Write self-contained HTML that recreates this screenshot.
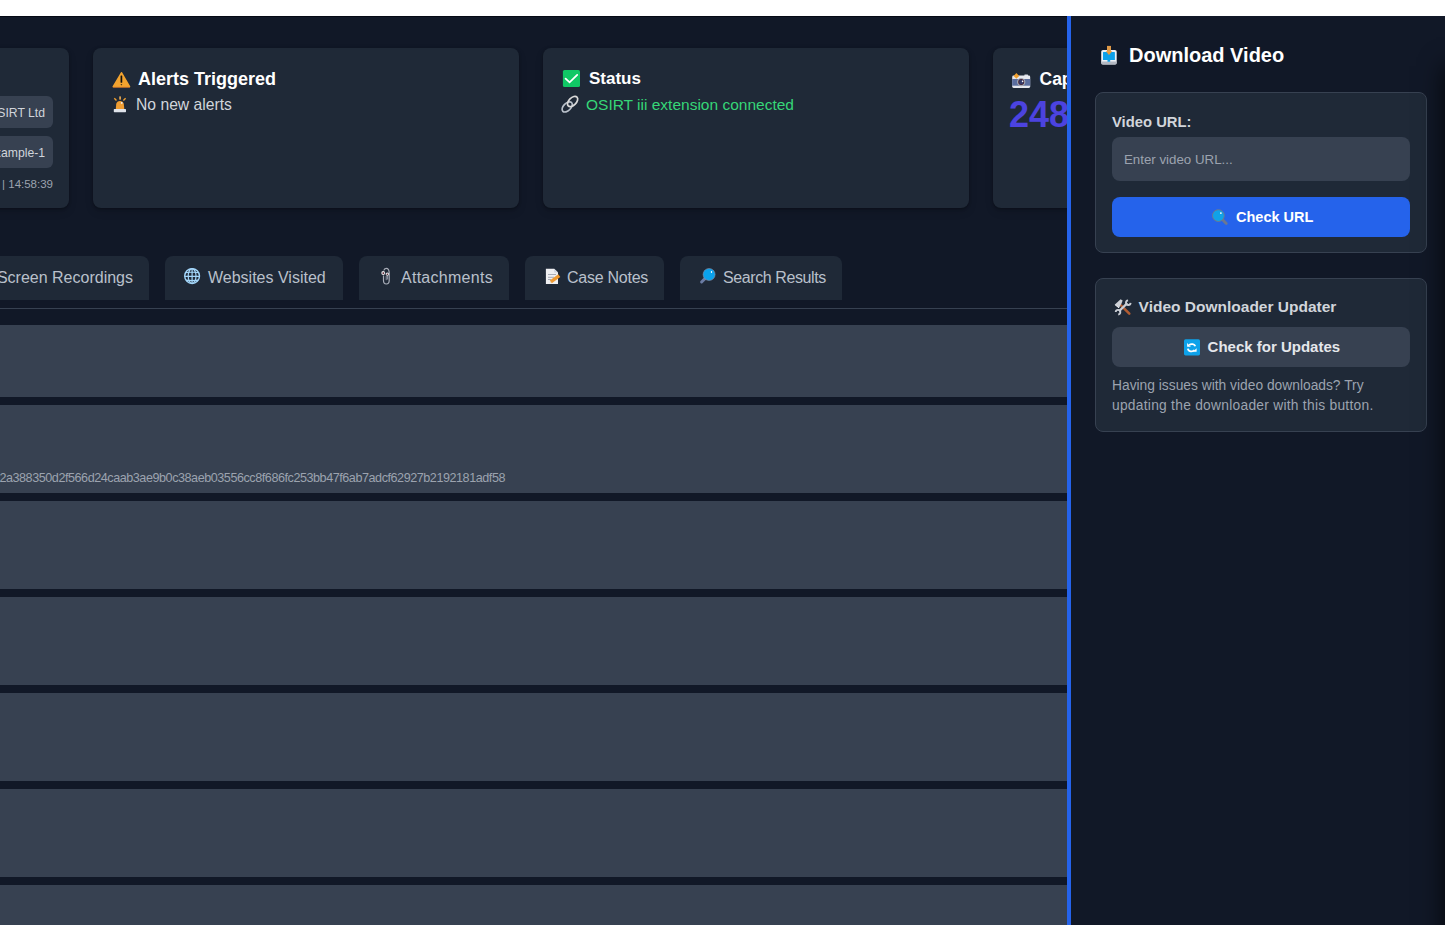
<!DOCTYPE html>
<html><head><meta charset="utf-8">
<style>
*{box-sizing:border-box;margin:0;padding:0}
html,body{width:1445px;height:925px;overflow:hidden;background:#111827;font-family:"Liberation Sans",sans-serif;}
.abs{position:absolute}
#topbar{left:0;top:0;width:1445px;height:16px;background:#fff}
#topline{left:0;top:16px;width:1445px;height:1px;background:#050914}
.card{position:absolute;top:48px;width:426px;height:160px;background:#1f2937;border-radius:8px;box-shadow:0 1px 3px rgba(0,0,0,.3),0 4px 8px rgba(0,0,0,.12)}
.badge{position:absolute;background:#374151;border-radius:6px;height:32px;color:#d1d5db;font-size:12.2px;line-height:34px;white-space:nowrap}
.tab{position:absolute;top:256px;height:44px;background:#1f2937;border-radius:8px 8px 0 0;color:#b9c0cb;font-size:16px;line-height:43px;white-space:nowrap}
.row{position:absolute;left:0;width:1067px;background:#374151}
.t{position:absolute;white-space:nowrap}
svg{position:absolute;overflow:visible}
#panel{left:1067px;top:16px;width:378px;height:909px;background:#111827;border-left:4px solid #2563eb}
.box{position:absolute;left:1095px;width:332px;background:#1f2937;border:1px solid #374151;border-radius:8px}
.btn{position:absolute;left:1112px;width:298px;height:40px;border-radius:8px}
</style></head><body>
<div class="abs" id="topbar"></div>
<div class="abs" id="topline"></div>

<!-- cards -->
<div class="card" style="left:-357px"></div>
<div class="card" style="left:93px"></div>
<div class="card" style="left:543px"></div>
<div class="card" style="left:993px"></div>

<div class="badge" style="left:-40px;top:96px;width:93px;padding-right:8px;text-align:right">OSIRT Ltd</div>
<div class="badge" style="left:-40px;top:136px;width:93px;padding-right:8px;text-align:right">example-1</div>
<div class="t" style="right:1392px;top:176px;font-size:11.5px;line-height:16px;color:#9ca3af">2025-01-01 | 14:58:39</div>

<div class="t" style="left:138px;top:68px;font-size:18px;line-height:22px;font-weight:700;color:#fff">Alerts Triggered</div>
<div class="t" style="left:136px;top:95px;font-size:15.7px;line-height:20px;color:#d1d5db">No new alerts</div>

<div class="t" style="left:589px;top:68px;font-size:17px;line-height:22px;font-weight:700;color:#fff">Status</div>
<div class="t" style="left:586px;top:95px;font-size:15.5px;line-height:20px;color:#36d677">OSIRT iii extension connected</div>

<div class="t" style="left:1039.5px;top:68px;font-size:17.5px;line-height:22px;font-weight:700;color:#fff">Capture</div>
<div class="t" style="left:1009px;top:95px;font-size:36px;line-height:40px;font-weight:700;color:#4c43e0">248</div>

<!-- tabs -->
<div class="tab" style="left:-60px;width:209px;padding-left:16px;text-align:right;padding-right:16px">Screen Recordings</div>
<div class="tab" style="left:165px;width:178px;padding-left:43px">Websites Visited</div>
<div class="tab" style="left:359px;width:150px;padding-left:42px;letter-spacing:0.27px">Attachments</div>
<div class="tab" style="left:525px;width:139px;padding-left:42px;letter-spacing:-0.25px">Case Notes</div>
<div class="tab" style="left:680px;width:162px;padding-left:43px;letter-spacing:-0.4px">Search Results</div>
<div class="abs" style="left:0;top:308px;width:1067px;height:1px;background:#374151"></div>

<!-- rows -->
<div class="row" style="top:325px;height:72px"></div>
<div class="row" style="top:405px;height:88px"></div>
<div class="row" style="top:501px;height:88px"></div>
<div class="row" style="top:597px;height:88px"></div>
<div class="row" style="top:693px;height:88px"></div>
<div class="row" style="top:789px;height:88px"></div>
<div class="row" style="top:885px;height:88px"></div>
<div class="t" style="right:940px;top:470px;font-size:12.6px;letter-spacing:-0.45px;line-height:16px;color:#9ca3af">2a388350d2f566d24caab3ae9b0c38aeb03556cc8f686fc253bb47f6ab7adcf62927b2192181adf58</div>

<!-- panel -->
<div class="abs" id="panel"></div>
<div class="t" style="left:1129px;top:43px;font-size:20px;line-height:24px;font-weight:700;color:#fff">Download Video</div>

<div class="box" style="top:92px;height:161px"></div>
<div class="t" style="left:1112px;top:113px;font-size:14.8px;line-height:18px;font-weight:700;color:#d1d5db">Video URL:</div>
<div class="abs" style="left:1112px;top:137px;width:298px;height:44px;background:#374151;border-radius:8px"></div>
<div class="t" style="left:1124px;top:151.5px;font-size:13.3px;line-height:16px;color:#9ca3af">Enter video URL...</div>
<div class="btn" style="top:197px;background:#2563eb"></div>
<div class="t" style="left:1236px;top:208px;font-size:14.5px;line-height:18px;font-weight:700;color:#fff">Check URL</div>

<div class="box" style="top:278px;height:154px"></div>
<div class="t" style="left:1138.6px;top:298px;font-size:15.5px;line-height:18px;font-weight:700;color:#d1d5db">Video Downloader Updater</div>
<div class="btn" style="top:327px;background:#374151"></div>
<div class="t" style="left:1207.6px;top:338px;font-size:15px;line-height:18px;font-weight:700;color:#e5e7eb">Check for Updates</div>
<div class="t" style="left:1112px;top:376px;font-size:13.8px;line-height:20px;color:#9ca3af">Having issues with video downloads? Try<br><span style="letter-spacing:0.26px">updating the downloader with this button.</span></div>


<!-- icons -->
<svg style="left:108px;top:66px" width="26" height="26" viewBox="0 0 26 26">
 <path d="M13.5 6.8 L21.5 20.7 L5.3 20.7 Z" fill="#f2a32f" stroke="#f2a32f" stroke-width="1.6" stroke-linejoin="round"/>
 <path d="M5.2 21.4 L21.6 21.4" stroke="#b8662c" stroke-width="0.8"/>
 <rect x="12.55" y="9.6" width="1.7" height="7.2" fill="#111" rx="0.5"/>
 <path d="M12.5 18.2 L14.3 18.2 L13.4 19.6 Z" fill="#111"/>
</svg>
<svg style="left:110px;top:94px" width="20" height="20" viewBox="0 0 20 20">
 <rect x="3.8" y="15.1" width="12.2" height="3.1" rx="0.6" fill="#dfe3ea"/>
 <path d="M5.8 15.1 L6.2 10 C6.6 8 8 6.9 10 6.9 C12 6.9 13.4 8 13.8 10 L14.3 15.1 Z" fill="#ef9d32"/>
 <circle cx="11.7" cy="8.9" r="0.9" fill="#eef4ff"/>
 <rect x="9.2" y="2.4" width="1.8" height="3.2" fill="#d9a050"/>
 <path d="M4.3 4.3 L6.5 6.5 M15.6 4.3 L13.4 6.5" stroke="#f0a030" stroke-width="1.4"/>
</svg>
<svg style="left:559px;top:66px" width="24" height="24" viewBox="0 0 24 24">
 <rect x="3.9" y="3.9" width="17.1" height="17.1" rx="1.6" fill="#10c865"/>
 <path d="M6.6 12.6 L10.6 16.3 L18.2 8.9" fill="none" stroke="#fff" stroke-width="1.8" stroke-linecap="round"/>
</svg>
<svg style="left:559px;top:94px" width="22" height="22" viewBox="0 0 22 22">
 <ellipse cx="8.2" cy="12.9" rx="6.2" ry="3.7" transform="rotate(-45 8.2 12.9)" fill="none" stroke="#b9c0ca" stroke-width="1.7"/>
 <ellipse cx="13.6" cy="7.5" rx="6.2" ry="3.7" transform="rotate(-45 13.6 7.5)" fill="none" stroke="#d9d9d9" stroke-width="1.7"/>
</svg>
<svg style="left:1008px;top:68px" width="26" height="26" viewBox="0 0 26 26">
 <rect x="16.3" y="6.6" width="3.8" height="1.6" rx="0.6" fill="#d6dae2"/>
 <rect x="4.2" y="7.6" width="18" height="12.4" rx="1.4" fill="#e6e8ee"/>
 <rect x="4.2" y="11" width="18" height="6.7" fill="#5b6e9f"/>
 <circle cx="13.2" cy="14.1" r="4.2" fill="#a4a9b3"/>
 <circle cx="13.2" cy="14.1" r="3" fill="#4a2030"/>
 <circle cx="13.2" cy="14.1" r="2.3" fill="#333a6a"/>
 <circle cx="14.6" cy="13.4" r="0.8" fill="#fff"/>
 <path d="M8.4 5.1 L11.2 7.9 L8.4 10.7 L5.6 7.9 Z" fill="#f0a030"/>
</svg>
<svg style="left:1097px;top:42px" width="24" height="24" viewBox="0 0 24 24">
 <rect x="4.2" y="8" width="15.5" height="14.6" rx="1.8" fill="#eef1f6"/>
 <rect x="4.4" y="19.6" width="15.1" height="3" rx="1" fill="#b3b8c2"/>
 <path d="M6 10.2 Q6 9.9 6.6 9.9 L17.3 9.9 Q17.9 9.9 17.9 10.5 L17.9 17.9 L13.2 17.9 L13.2 19.7 L10.5 19.7 L10.5 17.9 L6 17.9 Z" fill="#0ea1ea"/>
 <rect x="10" y="3.9" width="4" height="5.8" fill="#e09a48"/>
 <path d="M8.8 9.3 L15.2 9.3 L12 13 Z" fill="#ef9a38"/>
</svg>
<svg style="left:1208px;top:205px" width="24" height="24" viewBox="0 0 24 24">
 <path d="M14.6 14.8 L18.3 18.5" stroke="#6b7890" stroke-width="2.8" stroke-linecap="round"/>
 <circle cx="10.4" cy="10.6" r="5.9" fill="#10a2e8" stroke="#6b7a90" stroke-width="1"/>
 <circle cx="12.9" cy="8.1" r="0.9" fill="#fff"/>
</svg>
<svg style="left:1111px;top:295px" width="24" height="24" viewBox="0 0 24 24">
 <path d="M10 10.4 L18.3 18.6" stroke="#b15c32" stroke-width="2.6" stroke-linecap="round"/>
 <path d="M3.9 9.6 L9.6 4.2 L11.6 5.4 L10.6 8.2 L8 12.9 Z" fill="#cfd2d8"/>
 <path d="M3.9 9.6 L8 12.9" stroke="#eef0f3" stroke-width="1"/>
 <path d="M8 16.2 L16.3 8.1" stroke="#c9cdd4" stroke-width="2.3"/>
 <path d="M19.59 7.9 A2.3 2.3 0 1 1 17.1 5.41" fill="none" stroke="#c9cdd4" stroke-width="1.9"/>
 <path d="M4.71 17 A2.3 2.3 0 1 1 7.2 19.49" fill="none" stroke="#c9cdd4" stroke-width="1.9"/>
</svg>
<svg style="left:1180px;top:335px" width="24" height="24" viewBox="0 0 24 24">
 <rect x="4" y="4.3" width="16" height="16.1" rx="1.6" fill="#0ea2ea"/>
 <path d="M15.3 11.3 A3.6 3 0 0 0 9.2 10" fill="none" stroke="#fff" stroke-width="1.8"/>
 <path d="M7.1 8 L7.1 11.7 L10.8 11.7 Z" fill="#fff"/>
 <path d="M7.9 13.6 A3.6 3 0 0 0 14.5 15" fill="none" stroke="#fff" stroke-width="1.8"/>
 <path d="M16.6 13.2 L16.6 16.8 L12.9 16.8 Z" fill="#fff"/>
</svg>
<svg style="left:180px;top:264px" width="24" height="24" viewBox="0 0 24 24">
 <circle cx="12.1" cy="12.1" r="7.4" fill="none" stroke="#a3d6fa" stroke-width="1.4"/>
 <ellipse cx="12.1" cy="12.1" rx="3.9" ry="7.4" fill="none" stroke="#a3d6fa" stroke-width="1.2"/>
 <path d="M12.1 4.7 L12.1 19.5 M4.7 12.3 L19.5 12.3 M5.8 8.6 Q12.1 7.4 18.4 8.6 M5.8 16.2 Q12.1 17.2 18.4 16.2" fill="none" stroke="#a3d6fa" stroke-width="1.2"/>
</svg>
<svg style="left:374px;top:264px" width="24" height="24" viewBox="0 0 24 24">
 <path d="M9.5 11.5 L9.5 16.5 Q9.5 20 12.3 20 Q15.2 20 15.2 16.5 L15.2 9 Q15.2 4.3 12.2 4.3 Q10.2 4.3 9.8 6.5" fill="none" stroke="#a8adb8" stroke-width="1.2"/>
 <path d="M12.2 12 L12.2 16.2 M13.6 11.5 L13.6 15.5" fill="none" stroke="#8f96a4" stroke-width="1"/>
 <circle cx="9.2" cy="9" r="1.9" fill="#f1f2f4"/>
 <circle cx="13.3" cy="10.1" r="1.7" fill="#f1f2f4"/>
 <circle cx="9.3" cy="9.1" r="0.9" fill="#5a1d2a"/>
 <circle cx="13.3" cy="10.2" r="0.8" fill="#5a1d2a"/>
</svg>
<svg style="left:541px;top:264px" width="24" height="24" viewBox="0 0 24 24">
 <path d="M4.9 4.7 L13.2 4.7 L17 8.5 L17 20.1 L4.9 20.1 Z" fill="#eff0f2"/>
 <path d="M13.2 4.7 L13.2 8.5 L17 8.5" fill="#cfd6e2"/>
 <path d="M7 10.5 L15 10.5 M7 13.3 L13 13.3 M7 15.5 L10 15.5" stroke="#9ea4b0" stroke-width="0.9"/>
 <path d="M9.8 17.8 L18.3 11.6" stroke="#ee9a32" stroke-width="3.4"/>
 <path d="M8.7 18.6 L9.4 16.8 L10.6 18.3 Z" fill="#e8c8a0"/>
</svg>
<svg style="left:696px;top:264px" width="24" height="24" viewBox="0 0 24 24">
 <path d="M9.2 14.4 L5.6 18" stroke="#6b7ca4" stroke-width="3" stroke-linecap="round"/>
 <circle cx="13.1" cy="10.5" r="6" fill="#0aa2ec" stroke="#8a8fa8" stroke-width="0.6"/>
 <ellipse cx="15.5" cy="8" rx="0.7" ry="1" fill="#fff"/>
</svg>
<div class="abs" style="left:1300px;top:16px;width:145px;height:909px;overflow:hidden"><div class="abs" style="left:145px;top:50px;width:100px;height:1000px;background:#000;box-shadow:0 0 24px 0 rgba(0,0,0,0.8)"></div></div>
</body></html>
